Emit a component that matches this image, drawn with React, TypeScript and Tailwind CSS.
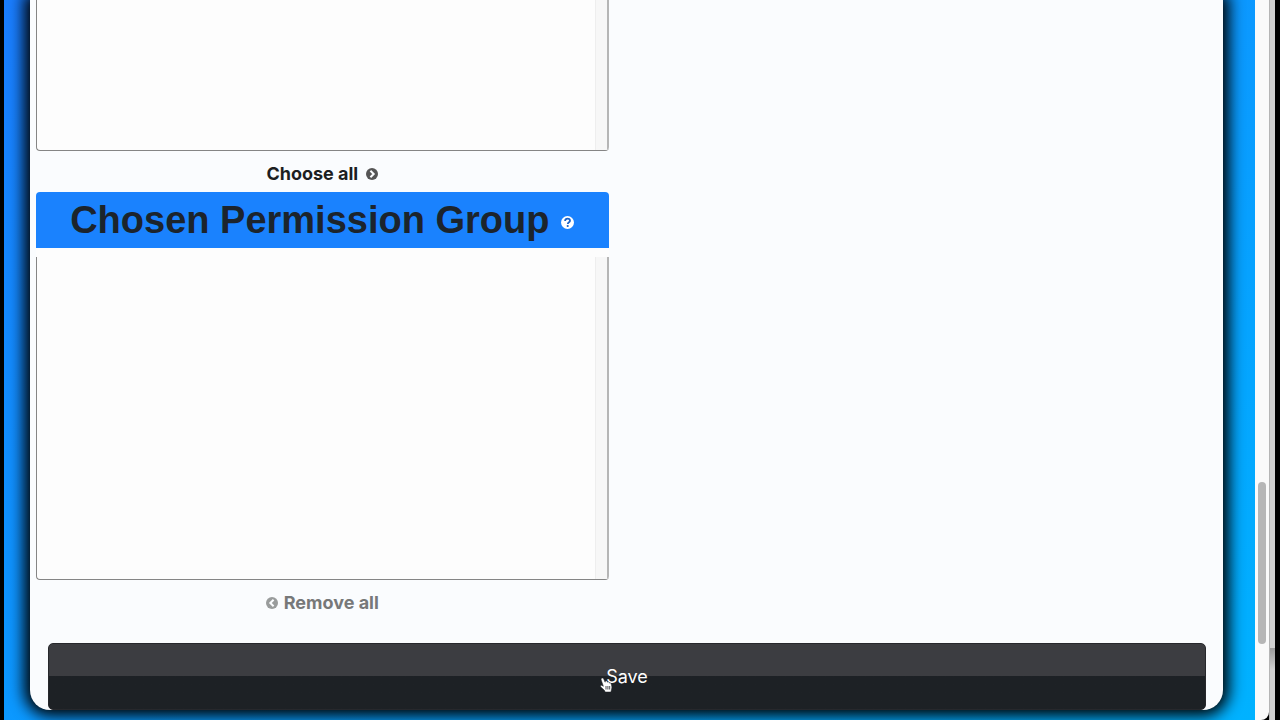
function ArrowIcon({ direction, className }: { direction: 'left' | 'right'; className: string }) {
  return (
    <svg viewBox="0 0 12 12" aria-hidden="true" className={`h-3 w-3 ${className}`}>
      <circle cx="6" cy="6" r="6" fill="currentColor" />
      <path
        d={direction === 'right' ? 'M4.400 2.700 7.700 6 4.400 9.300' : 'M7.600 2.700 4.300 6l3.300 3.300'}
        fill="none"
        stroke="#fafcfe"
        strokeWidth="2"
      />
    </svg>
  );
}

function HelpIcon() {
  return (
    <svg viewBox="0 0 13 13" aria-hidden="true" className="h-[13px] w-[13px]">
      <circle cx="6.5" cy="6.5" r="6.5" fill="#fff" />
      <path
        d="M4.100 4.900c0-1.400 1-2.300 2.400-2.300s2.500.9 2.500 2.100c0 1.600-2.200 1.600-2.200 3.300"
        fill="none"
        stroke="#1a62c8"
        strokeWidth="1.800"
      />
      <circle cx="6.700" cy="10" r="1.100" fill="#1a62c8" />
    </svg>
  );
}

function HandCursor() {
  return (
    <svg viewBox="0 0 14 16" aria-hidden="true" className="pointer-events-none absolute top-[34px] left-[552px] h-4 w-[14px]">
      <path
        d="M1.700 1.200c.8-.5 1.600 0 2 .8l1.500 3.200V4.300c.3-.8 1.500-.8 1.900 0l.3.900c.4-.7 1.500-.6 1.800.2l.2.700c.5-.5 1.500-.2 1.700.6.500 1.700 1.100 3.500.500 5.200L10.900 15H5.200l-.8-1.700L.8 9.900C0 9 .8 8 1.900 8.400l1.500.9L1.200 3c-.3-.7-.1-1.400.5-1.800Z"
        fill="#fff"
        stroke="#1c2024"
        strokeWidth=".5"
      />
      <path d="M6 9v3.500M7.900 9v3.500M9.700 9v3.500" stroke="#1c2024" strokeWidth=".8" />
    </svg>
  );
}

function ListBox({ id, label, className }: { id: string; label: string; className: string }) {
  return (
    <div
      className={`flex overflow-hidden rounded-b border-b border-l border-[#858585] bg-[#fdfdfd] ${className}`}
    >
      <select
        id={id}
        multiple
        aria-label={label}
        className="h-full min-w-0 flex-1 appearance-none bg-transparent outline-none"
      />
      <div className="w-[14px] border-r-2 border-l border-r-[#b5b5b5] border-l-[#eeeeee] bg-[#f7f7f7]" />
    </div>
  );
}

export default function App() {
  return (
    <div className="flex h-screen overflow-hidden bg-black pr-[5px] pl-1 font-['Inter','Liberation_Sans',sans-serif]">
      <main className="min-w-0 flex-1 bg-linear-to-br from-[#1a7dff] to-[#00b2ff] pr-8 pb-[10px] pl-[26px]">
        <form
          onSubmit={(e) => e.preventDefault()}
          className="flex h-full flex-col rounded-b-[20px] bg-[#fafcfe] shadow-[0_0_15px_6px_#000000]"
        >
          <section className="ml-[6px] w-[48%]">
            <ListBox id="available" label="Available Permission Group" className="h-[151px]" />
            <div className="flex h-[41px] items-center justify-center pt-1">
              <button type="button" className="flex items-center gap-2 text-lg font-bold text-[#1c1e21]">
                Choose all
                <ArrowIcon direction="right" className="text-[#555555]" />
              </button>
            </div>
            <div className="flex h-14 items-center justify-center gap-3 rounded-t bg-[#1a82fe]">
              <label
                htmlFor="chosen"
                className="font-['Liberation_Sans',Arial,sans-serif] text-[38px] leading-[56px] font-bold whitespace-nowrap text-[#1c242c]"
              >
                Chosen Permission Group
              </label>
              <button type="button" aria-label="Help" className="pt-1">
                <HelpIcon />
              </button>
            </div>
            <div className="bg-[#fdfdfd] pt-[9px]">
              <ListBox id="chosen" label="Chosen Permission Group" className="h-[323px]" />
            </div>
            <div className="flex h-[41px] items-center justify-center pt-1">
              <button type="button" className="flex items-center gap-1.5 text-lg font-bold text-[#777879]">
                <ArrowIcon direction="left" className="text-[#999c9c]" />
                Remove all
              </button>
            </div>
          </section>
          <div className="relative mt-auto mr-[17px] ml-[18px]">
            <button
              type="submit"
              className="h-[67px] w-full rounded-[5px] border border-[#27282c] bg-linear-to-b from-[#3c3d41] from-49% to-[#1d2125] to-49% text-lg text-white"
            >
              Save
            </button>
            <HandCursor />
          </div>
        </form>
      </main>
      <div className="relative w-[14px] rounded-br-lg bg-[#fafafa]">
        <div className="absolute top-[67%] right-[3px] h-[162px] w-2 rounded-full bg-[#b6b6b6]" />
      </div>
      <div className="flex w-[6px] flex-col border-l border-[#b5b5b5]">
        <div className="h-[90%] bg-[#d0d0d0]" />
        <div className="flex-1 bg-linear-to-b from-[#999999] to-[#d0d0d0] to-30%" />
      </div>
    </div>
  );
}
